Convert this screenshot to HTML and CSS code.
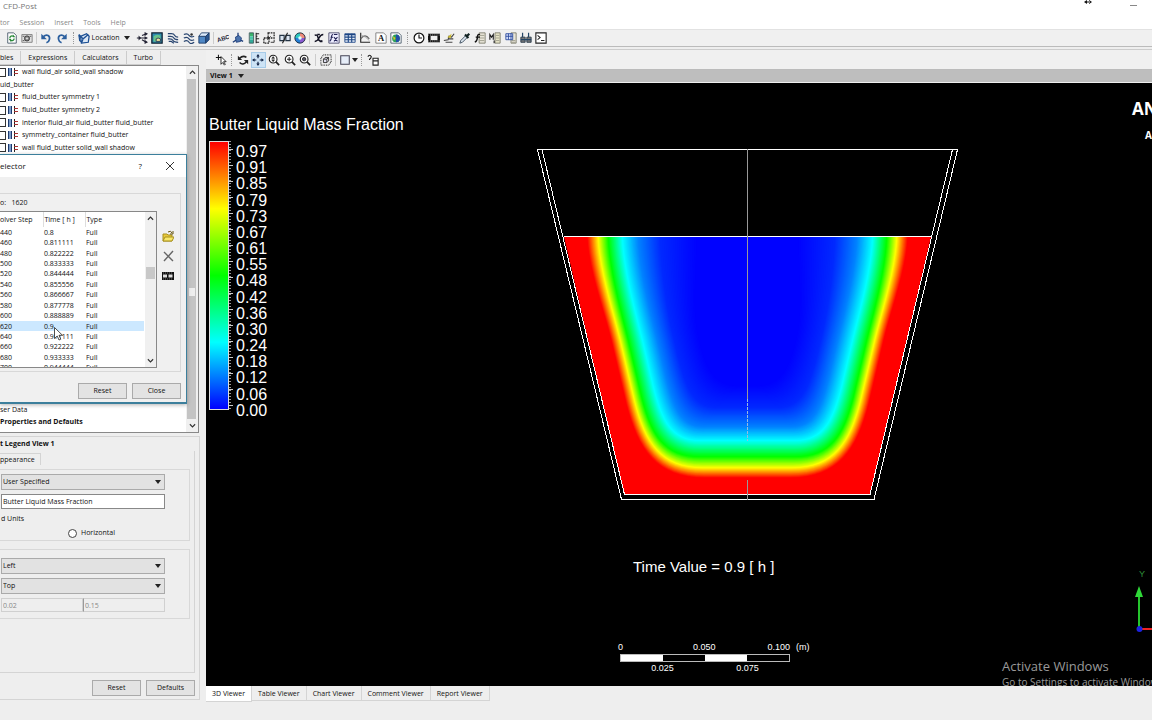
FILE: index.html
```html
<!DOCTYPE html>
<html lang="en">
<head>
<meta charset="utf-8">
<title>CFD-Post</title>
<link rel="stylesheet" href="styles.css">
</head>
<body>
<div class="app">
  <header class="titlebar">
    <span>CFD-Post</span>
    <svg class="resize-mark" width="8" height="6" viewBox="0 0 8 6"><path d="M0 2l3-2v4zM8 2L5 0v4zM2 1.500h4v1H2z" fill="#111"/></svg>
    <svg class="minimize" width="8" height="6" viewBox="0 0 8 6"><path d="M0 5.500h7" stroke="#888"/></svg>
  </header>
  <nav class="menubar">
    <a href="#">tor</a><a href="#">Session</a><a href="#">Insert</a><a href="#">Tools</a><a href="#">Help</a>
  </nav>

  <div class="toolbar" role="toolbar" aria-label="Main">
    <div class="group g-file">
      <button aria-label="Refresh"><svg viewBox="0 0 14 14"><path d="M2 1h7l3 3v9H2z" fill="#fff" stroke="#456"/><path d="M4.500 7a2.500 2.500 0 0 1 4-2M9.500 7.500a2.500 2.500 0 0 1-4 2" fill="none" stroke="#2a8a3a" stroke-width="1.500"/><path d="M8 3v3h3zM6 12V8H3z" fill="#2a8a3a"/></svg></button>
      <button aria-label="Snapshot"><svg viewBox="0 0 14 14"><path d="M1 3h12v9H1z" fill="#e4e4e4" stroke="#777"/><circle cx="7" cy="7.500" r="3" fill="#888" stroke="#333"/><circle cx="7" cy="7.500" r="1" fill="#eee"/><path d="M2 5h2M10 5h2M2 10h2" stroke="#444"/></svg></button>
    </div>
    <i class="sep"></i>
    <div class="group g-undo">
      <button aria-label="Undo"><svg viewBox="0 0 14 14"><path d="M4 5.500c4-4 8-1 7 3q-.5 3-3.500 4" fill="none" stroke="#2b5f9e" stroke-width="2"/><path d="M1.500 2v6.500H8z" fill="#2b5f9e"/></svg></button>
      <button aria-label="Redo"><svg viewBox="0 0 14 14"><path d="M10 5.500c-4-4-8-1-7 3q.5 3 3.500 4" fill="none" stroke="#2b5f9e" stroke-width="2"/><path d="M12.500 2v6.500H6z" fill="#2b5f9e"/></svg></button>
    </div>
    <i class="handle"></i>
    <button class="location"><svg viewBox="0 0 14 14"><path d="M3 5l7-3 3 3-1 7-8 1z" fill="#dbe7f5" stroke="#1c4f93" stroke-width="1.500"/><path d="M1 3l5 5 6-5M6 8l-2 5M1 3l1 7 3 2" fill="none" stroke="#1c4f93" stroke-width="1.500"/></svg><span>Location</span><i class="arrow"></i></button>
    <div class="group g-objects">
      <button aria-label="Vector"><svg viewBox="0 0 14 14"><path d="M1 7h6M7 4l5-2M7 7h5M7 9l5 3" stroke="#223" stroke-width="1.300"/><path d="M3 4l3 3-3 3zM10 0l4 2-4 3zM10 5l4 2-4 2zM10 9l4 3-4 2z" fill="#223"/></svg></button>
      <button aria-label="Contour"><svg viewBox="0 0 14 14"><path d="M1 1h12v12H1z" fill="#2e8fb0" stroke="#123" stroke-width="1.500"/><path d="M3 11V5q3-3 8-1v7z" fill="#69c38a"/><path d="M6 11V8q2-2 5 0v3z" fill="#e6e09a" stroke="#235"/></svg></button>
      <button aria-label="Streamline"><svg viewBox="0 0 14 14"><path d="M1 2h4q3 0 4 2t4 2M1 5h3q3 0 4 2t5 2M1 8h2q3 0 4 2t6 2M2 11h3l3 2" fill="none" stroke="#294570" stroke-width="1.400"/></svg></button>
      <button aria-label="Particle track"><svg viewBox="0 0 14 14"><path d="M1 3q4-2 6 1t6 1M1 7q4-2 6 1t6 1M1 11q4-2 6 1t6 0" fill="none" stroke="#294570" stroke-width="1.400"/><circle cx="10" cy="3" r="1.500" fill="#333"/></svg></button>
      <button aria-label="Volume rendering"><svg viewBox="0 0 14 14"><path d="M1 5h8v8H1z" fill="#4f87c4" stroke="#1b3a66"/><path d="M1 5l3-4h9L9 5z" fill="#dceafa" stroke="#1b3a66"/><path d="M9 5l4-4v8l-4 4z" fill="#2a5690" stroke="#1b3a66"/></svg></button>
    </div>
    <i class="sep"></i>
    <div class="group g-tools">
      <button aria-label="Text"><svg viewBox="0 0 14 14"><text x="0" y="10" font-family="Liberation Sans" font-size="7" font-weight="700" fill="#223" transform="rotate(-18 7 8)">ABC</text></svg></button>
      <button aria-label="Coordinate frame"><svg viewBox="0 0 14 14"><path d="M7 1v7L1 12M7 8l6 3" fill="none" stroke="#1c3c78" stroke-width="1.500"/><path d="M4 6l4-2 3 3-1 4-5 1z" fill="#4d74ad" stroke="#1c3c78"/></svg></button>
      <button aria-label="Legend"><svg viewBox="0 0 14 14"><path d="M2 1h4v4H2z" fill="#3bb36a"/><path d="M2 5h4v4H2z" fill="#4cc8a8"/><path d="M2 9h4v4H2z" fill="#3a9"/><path d="M1.500 1h5v12h-5z" fill="none" stroke="#355"/><path d="M9.500 1v12M9 2h4M9 5h2M9 8h4M9 12h4" fill="none" stroke="#222" stroke-width="1.200"/></svg></button>
      <button aria-label="Instance transform"><svg viewBox="0 0 14 14"><path d="M6 1h7v6H6z M1 7h6v6H1z" fill="#eee" stroke="#222" stroke-width="1.500" stroke-dasharray="2 1"/><path d="M5 9l4-4M9 12h4V9" stroke="#222" fill="none"/></svg></button>
      <button aria-label="Clip plane"><svg viewBox="0 0 14 14"><path d="M1 4h5v6H1zM8 4h5v6H8z" fill="#dce6f2" stroke="#234" stroke-width="1.300"/><path d="M4 13l6-12" stroke="#222" stroke-width="1.300"/></svg></button>
      <button aria-label="Color map"><svg viewBox="0 0 14 14"><path d="M7 7V1a6 6 0 0 1 6 6z" fill="#f08a7a"/><path d="M7 7h6a6 6 0 0 1-6 6z" fill="#8a5ad0"/><path d="M7 7v6a6 6 0 0 1-6-6z" fill="#2580d8"/><path d="M7 7H1a6 6 0 0 1 6-6z" fill="#30c8c0"/><circle cx="7" cy="7" r="6" fill="none" stroke="#123"/><circle cx="7" cy="7" r="2" fill="#dff"/></svg></button>
    </div>
    <i class="sep"></i>
    <div class="group g-data">
      <button aria-label="Variable"><svg viewBox="0 0 14 14"><path d="M2 4q3-2 4 3t5 3M12 3Q9 3 7 7t-5 4M5 3h3M8 11h3" fill="none" stroke="#112" stroke-width="1.700"/></svg></button>
      <button aria-label="Expression"><svg viewBox="0 0 14 14"><path d="M1 1h12v12H1z" fill="#eef" stroke="#446"/><path d="M6 3Q4 3 4 6t-2 5M3 6h3M7 6l4 5M11 6l-4 5M7 3h4" fill="none" stroke="#225" stroke-width="1.200"/></svg></button>
      <button aria-label="Table"><svg viewBox="0 0 14 14"><path d="M1 2h12v10H1z" fill="#e8f0fa" stroke="#1c4585"/><path d="M1 3h12M1 6h12M1 9h12M5 2v10M9 2v10" stroke="#1c4585" stroke-width="1.300"/></svg></button>
      <button aria-label="Chart"><svg viewBox="0 0 14 14"><path d="M2 1v11h11" fill="none" stroke="#222" stroke-width="1.300"/><path d="M2 8q5-7 10 0" fill="none" stroke="#666" stroke-width="1.300"/><path d="M3 4q5 1 9 6" fill="none" stroke="#999"/></svg></button>
      <button aria-label="Comment"><svg viewBox="0 0 14 14"><path d="M1 1h9l3 3v9H1z" fill="#fff" stroke="#777"/><text x="3.500" y="11" font-family="Liberation Serif" font-size="10" font-weight="700" fill="#111">A</text></svg></button>
      <button aria-label="Figure"><svg viewBox="0 0 14 14"><path d="M1 1h9l3 3v9H1z" fill="#fff" stroke="#456"/><circle cx="7" cy="7.500" r="4.500" fill="#2aa05a"/><path d="M7 3a4.500 4.500 0 0 1 0 9z" fill="#234fa8"/><path d="M3.500 5l3 2-2 3z" fill="#e3c32d"/></svg></button>
    </div>
    <i class="handle"></i>
    <div class="group g-calc">
      <button aria-label="Timestep selector"><svg viewBox="0 0 14 14"><circle cx="7" cy="7" r="5.700" fill="#fff" stroke="#111" stroke-width="1.400"/><path d="M7 3v4h3.500" fill="none" stroke="#111" stroke-width="1.300"/></svg></button>
      <button aria-label="Animation"><svg viewBox="0 0 14 14"><path d="M0 2h14v10H0z" fill="#111"/><path d="M3 4.500h8v5H3z" fill="#eee"/><path d="M0 3.500h14M0 10.500h14" stroke="#ccc" stroke-dasharray="1 1.500"/></svg></button>
      <button aria-label="Quick editor"><svg viewBox="0 0 14 14"><path d="M1 10l5-1 1-4 3 1 3-4M7 8h5M3 12h8" fill="none" stroke="#444" stroke-width="1.300"/><path d="M5 6l5-4-1 5z" fill="#c9b82e"/></svg></button>
      <button aria-label="Probe"><svg viewBox="0 0 14 14"><path d="M1 13l1-3 6-6 2 2-6 6z" fill="#dce6ef" stroke="#345"/><path d="M7 3l4 4M9 5l3-3" stroke="#122" stroke-width="2.600"/></svg></button>
      <button aria-label="Function calculator"><svg viewBox="0 0 14 14"><path d="M6 1h7v12H6z" fill="#e8e5d8" stroke="#776"/><path d="M7 4h5M7 7h5M7 10h5" stroke="#998"/><path d="M7 3Q4 2 4 6t-3 6M2 6h5" fill="none" stroke="#111" stroke-width="1.600"/></svg></button>
      <button aria-label="Macro calculator"><svg viewBox="0 0 14 14"><path d="M7 1h6v12H7z" fill="#e8e5c8" stroke="#776"/><path d="M8 4h4M8 7h4M8 10h4" stroke="#998"/><path d="M1 9V3l2 3 2-3v6M6 10v3" fill="none" stroke="#222" stroke-width="1.300"/></svg></button>
      <button aria-label="Mesh calculator"><svg viewBox="0 0 14 14"><path d="M7 1h6v12H7z" fill="#e8e5d8" stroke="#776"/><path d="M8 10h4M8 12h4" stroke="#998"/><path d="M1 2h8v7H1zM1 5h8M4 2v7M7 2v7" fill="#dbe5ff" stroke="#25459a"/></svg></button>
      <button aria-label="Case comparison"><svg viewBox="0 0 14 14"><path d="M1 6h5v6H1zM8 6h5v6H8z" fill="#777" stroke="#234"/><path d="M3 1v5M10 1v5M1 9h12" stroke="#246" stroke-width="1.400"/></svg></button>
      <button aria-label="Command editor"><svg viewBox="0 0 14 14"><path d="M1 1h12v12H1z" fill="#fff" stroke="#222" stroke-width="1.300"/><path d="M3 4l3 2.500L3 9M7 10h4" fill="none" stroke="#222" stroke-width="1.200"/></svg></button>
    </div>
  </div>

  <div class="workspace">
    <aside class="side">
      <div class="tabs"><button>bles</button><button>Expressions</button><button>Calculators</button><button>Turbo</button></div>
      <div class="tree">
        <ul class="tree-top">
          <li><input type="checkbox" id="c1"><i class="bc"></i><label for="c1">wall fluid_air solid_wall shadow</label></li>
          <li>uid_butter</li>
          <li><input type="checkbox" id="c2"><i class="bc"></i><label for="c2">fluid_butter symmetry 1</label></li>
          <li><input type="checkbox" id="c3"><i class="bc"></i><label for="c3">fluid_butter symmetry 2</label></li>
          <li><input type="checkbox" id="c4"><i class="bc"></i><label for="c4">interior fluid_air fluid_butter fluid_butter</label></li>
          <li><input type="checkbox" id="c5"><i class="bc"></i><label for="c5">symmetry_container fluid_butter</label></li>
          <li><input type="checkbox" id="c6"><i class="bc"></i><label for="c6">wall fluid_butter solid_wall shadow</label></li>
        </ul>
        <ul class="tree-bottom"><li>ser Data</li><li class="bold">Properties and Defaults</li></ul>
        <div class="scroll"><svg viewBox="0 0 8 6"><path d="M1 5l3-3 3 3"/></svg><i class="track"><i class="thumb"></i></i><svg viewBox="0 0 8 6"><path d="M1 1l3 3 3-3"/></svg></div>
      </div>

      <section class="details">
        <h2>t Legend View 1</h2>
        <div class="page">
          <button class="page-tab">ppearance</button>
          <fieldset>
            <div class="combo"><select aria-label="Title mode"><option>User Specified</option></select></div>
            <input class="field" type="text" aria-label="Title" value="Butter Liquid Mass Fraction">
            <p>d Units</p>
            <label class="radio"><input type="radio" name="orient">Horizontal</label>
          </fieldset>
          <fieldset class="second">
            <div class="combo"><select aria-label="X justification"><option>Left</option></select></div>
            <div class="combo"><select aria-label="Y justification"><option>Top</option></select></div>
            <div class="pair"><input type="text" aria-label="X position" value="0.02" disabled><input type="text" aria-label="Y position" value="0.15" disabled></div>
          </fieldset>
        </div>
        <div class="actions"><button class="btn">Reset</button><button class="btn">Defaults</button></div>
      </section>

      <section class="dialog" role="dialog" aria-label="Timestep Selector">
        <header><span>elector</span><button aria-label="Help">?</button><button aria-label="Close window"><svg viewBox="0 0 8 8"><path d="M0 0l8 8M8 0L0 8"/></svg></button></header>
        <div class="dialog-group">
          <p>o:&nbsp;&nbsp; 1620</p>
          <div class="dialog-main">
            <div class="list">
              <table>
                <thead><tr><th>olver Step</th><th>Time [ h ]</th><th>Type</th></tr></thead>
                <tbody>
                  <tr><td>440</td><td>0.8</td><td>Full</td></tr>
                  <tr><td>460</td><td>0.811111</td><td>Full</td></tr>
                  <tr><td>480</td><td>0.822222</td><td>Full</td></tr>
                  <tr><td>500</td><td>0.833333</td><td>Full</td></tr>
                  <tr><td>520</td><td>0.844444</td><td>Full</td></tr>
                  <tr><td>540</td><td>0.855556</td><td>Full</td></tr>
                  <tr><td>560</td><td>0.866667</td><td>Full</td></tr>
                  <tr><td>580</td><td>0.877778</td><td>Full</td></tr>
                  <tr><td>600</td><td>0.888889</td><td>Full</td></tr>
                  <tr class="selected"><td>620</td><td>0.9</td><td>Full</td></tr>
                  <tr><td>640</td><td>0.911111</td><td>Full</td></tr>
                  <tr><td>660</td><td>0.922222</td><td>Full</td></tr>
                  <tr><td>680</td><td>0.933333</td><td>Full</td></tr>
                  <tr><td>700</td><td>0.944444</td><td>Full</td></tr>
                </tbody>
              </table>
              <div class="scroll light"><svg viewBox="0 0 8 6"><path d="M1 5l3-3 3 3"/></svg><i class="track"><i class="thumb"></i></i><svg viewBox="0 0 8 6"><path d="M1 1l3 3 3-3"/></svg></div>
            </div>
            <div class="list-tools">
              <button aria-label="Add"><svg viewBox="0 0 12 12"><path d="M1 11V4h4l1 1h4v6z" fill="#e8c93a" stroke="#a8901f"/><path d="M1 11l2-4h9l-2 4z" fill="#f8e86a" stroke="#a8901f"/><path d="M6 2q3-2 4 1M11 1v3H8" fill="none" stroke="#665510"/></svg></button>
              <button aria-label="Delete"><svg viewBox="0 0 12 12"><path d="M2 2l9 9M11 1l-9 10" stroke="#666" stroke-width="1.400"/></svg></button>
              <button aria-label="Animate"><svg viewBox="0 0 12 12"><path d="M0 2h12v8H0z" fill="#111"/><path d="M1 4.500h4v3H1zM6.500 4.500h4v3h-4z" fill="#ddd"/><path d="M1 3h10M1 9h10" stroke="#999" stroke-width=".7" stroke-dasharray="1 1"/></svg></button>
            </div>
          </div>
        </div>
        <div class="actions"><button class="btn">Reset</button><button class="btn">Close</button></div>
        <svg class="cursor" viewBox="0 0 9 14"><path d="M.5.5v11l2.700-2.500 1.800 4 1.800-.8-1.800-3.900h3.500z" fill="#fff" stroke="#222" stroke-width=".8"/></svg>
      </section>
    </aside>

    <main class="view">
      <div class="toolbar viewbar" role="toolbar" aria-label="Viewer">
        <button aria-label="Select"><svg viewBox="0 0 14 14"><path d="M1 4h6M4 1v6" stroke="#111" stroke-width="1.200"/><path d="M7 3v9l2-2 2 3 1-1-2-3h3z" fill="#fff" stroke="#111"/></svg></button>
        <i class="handle"></i>
        <div class="group g-nav">
          <button aria-label="Rotate"><svg viewBox="0 0 14 14"><path d="M3 5q4-4 8-1M11 9q-4 5-8 1" fill="none" stroke="#222" stroke-width="1.800"/><path d="M1 2v5h5zM13 12V7H8z" fill="#222"/></svg></button>
          <button class="active" aria-label="Pan"><svg viewBox="0 0 14 14"><path d="M7 2v3M7 9v3M2 7h3M9 7h3" stroke="#124" stroke-width="1.400"/><path d="M7 0l2 3H5zM7 14l2-3H5zM0 7l3-2v4zM14 7l-3-2v4z" fill="#124"/></svg></button>
          <button aria-label="Zoom"><svg viewBox="0 0 14 14"><circle cx="6" cy="6" r="4.500" fill="#fff" stroke="#222" stroke-width="1.300"/><path d="M9 9l4 4" stroke="#222" stroke-width="2"/><path d="M4 6h4M6 3l1.500 2h-3zM6 9l1.500-2h-3z" fill="#222" stroke="#222" stroke-width=".6"/></svg></button>
          <button aria-label="Zoom box"><svg viewBox="0 0 14 14"><circle cx="6" cy="6" r="4.500" fill="#fff" stroke="#222" stroke-width="1.300"/><path d="M9 9l4 4" stroke="#222" stroke-width="2"/><path d="M3.500 6h5M6 3.500v5" stroke="#222" stroke-width="1.200"/></svg></button>
          <button aria-label="Fit view"><svg viewBox="0 0 14 14"><circle cx="6" cy="6" r="4.500" fill="#fff" stroke="#222" stroke-width="1.300"/><path d="M9 9l4 4" stroke="#222" stroke-width="2"/><circle cx="6" cy="6" r="2" fill="#556" stroke="#222"/></svg></button>
        </div>
        <i class="sep"></i>
        <button aria-label="Highlight"><svg viewBox="0 0 14 14"><path d="M4 1h9v8l-3 4H1V5z" fill="none" stroke="#333" stroke-width="1.500" stroke-dasharray="1 1"/><path d="M4 6h4v4H4zM4 6l2-2h4L8 6M10 4v4l-2 2" fill="#dde" stroke="#222"/></svg></button>
        <i class="sep"></i>
        <button class="layout" aria-label="Viewport layout"><svg viewBox="0 0 14 14"><path d="M2 2h10v10H2z" fill="#e6edf8" stroke="#445" stroke-width="1.200"/></svg><i class="arrow"></i></button>
        <i class="handle"></i>
        <button aria-label="Viewer help"><svg viewBox="0 0 14 14"><path d="M1 3q2-3 4 0 0 2-2 3v1" fill="none" stroke="#111" stroke-width="1.300"/><path d="M7 5h6v8H7zM7 8h6" fill="#fff" stroke="#222" stroke-width="1.300"/></svg></button>
      </div>
      <button class="viewhead">View 1 <i class="arrow"></i></button>

      <div class="scene">
        <div class="legend">
          <h1>Butter Liquid Mass Fraction</h1>
          <div class="legend-body">
            <i class="bar"></i><i class="ticks"></i>
            <ol><li>0.97</li><li>0.91</li><li>0.85</li><li>0.79</li><li>0.73</li><li>0.67</li><li>0.61</li><li>0.55</li><li>0.48</li><li>0.42</li><li>0.36</li><li>0.30</li><li>0.24</li><li>0.18</li><li>0.12</li><li>0.06</li><li>0.00</li></ol>
          </div>
        </div>
        <svg class="cup" viewBox="536 148 424 354" role="img" aria-label="Mass fraction contour in container">
          <defs><clipPath id="fill"><path d="M564 237H931L870 494H624z"/></clipPath></defs>
          <g clip-path="url(#fill)"><path d="M560 230h380v270H560z" fill="#f00"/><g id="bands"></g></g>
          <g fill="none" stroke="#fff" shape-rendering="crispEdges">
            <path d="M537 149.500H957.500L874 499.500H621.500L537.500 149.500M542 149.500L624.500 494.500H870L952.500 149.500M564 236.500H931"/>
            <path d="M747 149v250M747 480v20" stroke="#999"/>
            <path d="M747 399v42" stroke="#9bd" stroke-dasharray="3 1"/>
          </g>
        </svg>
        <p class="time">Time Value = 0.9 [ h ]</p>
        <div class="scale">
          <div class="scale-top"><span>0</span><span>0.050</span><span>0.100</span><span class="unit">(m)</span></div>
          <div class="scale-bar"><i></i><i></i><i></i><i></i></div>
          <div class="scale-low"><span>0.025</span><span>0.075</span></div>
        </div>
        <div class="brand"><strong>ANSYS</strong><span>Academic</span></div>
        <svg class="axes" viewBox="0 0 20 64"><text x="7" y="8" font-family="Liberation Sans" font-size="9" fill="#2f8f3a">Y</text><path d="M7 28v31" stroke="#25c52d" stroke-width="2"/><path d="M7 17l4 11H3z" fill="#2fd838"/><path d="M9 60h11" stroke="#e22" stroke-width="2"/><circle cx="7.500" cy="60" r="3" fill="#1c22e0"/></svg>
        <div class="activate"><strong>Activate Windows</strong><span>Go to Settings to activate Windows.</span></div>
      </div>

      <nav class="viewtabs"><button class="on">3D Viewer</button><button>Table Viewer</button><button>Chart Viewer</button><button>Comment Viewer</button><button>Report Viewer</button></nav>
    </main>
  </div>
</div>
<script src="contour.js"></script>
</body>
</html>
```

FILE: contour.js
```js
// Key iso-lines, outermost first: top x, mid x, end of straight side (y), floor y, start of flat floor (x), colour
const keys = [
  [587, 611, 404, 478, 705, [255, 0, 0]],
  [598, 620, 402, 468, 703, [255, 255, 0]],
  [608, 628, 398, 457, 700, [0, 255, 0]],
  [622, 642, 388, 441, 700, [0, 255, 255]],
  [638, 657, 375, 427, 705, [0, 128, 255]],
  [660, 674, 355, 408, 718, [0, 40, 255]],
  [698, 700, 342, 385, 740, [0, 0, 255]]
];
const mid = 747.5;
const mirror = x => 2 * mid - x;
const mix = (a, b, t) => a + (b - a) * t;

function band(tx, mx, sy, fy, fx) {
  const sx = mx + 0.235 * (sy - 340);
  const k = (fy - sy) * 0.62;
  const cx = sx + 0.26 * k;
  const c2 = fx - (fx - sx) * 0.62;
  const m = mirror;
  return `M${tx} 230V237C${tx + 1} 268 ${mx - 8} 308 ${mx} 340L${sx} ${sy}` +
    `C${cx} ${sy + k} ${c2} ${fy} ${fx} ${fy}H${m(fx)}` +
    `C${m(c2)} ${fy} ${m(cx)} ${sy + k} ${m(sx)} ${sy}` +
    `L${m(mx)} 340C${m(mx - 8)} 308 ${m(tx + 1)} 268 ${m(tx)} 237V230z`;
}

const host = document.getElementById("bands");
const steps = 20;
for (let i = 0; i < keys.length - 1; i++) {
  for (let s = 0; s < steps; s++) {
    const t = s / steps;
    const p = [0, 1, 2, 3, 4].map(n => mix(keys[i][n], keys[i + 1][n], t));
    const c = [0, 1, 2].map(n => Math.round(mix(keys[i][5][n], keys[i + 1][5][n], t)));
    const path = document.createElementNS("http://www.w3.org/2000/svg", "path");
    path.setAttribute("d", band(...p));
    path.setAttribute("fill", `rgb(${c})`);
    host.appendChild(path);
  }
}
```

FILE: styles.css
```css
* { box-sizing: border-box; }
body { margin: 0; font: 7px/10px "Open Sans", "Noto Sans", sans-serif; color: #111; background: #eee; }
button, input, select { font: inherit; color: inherit; margin: 0; padding: 0; border: 0; background: none; border-radius: 0; }
h1, h2, p, ul, ol { margin: 0; padding: 0; font: inherit; list-style: none; }
svg { display: block; }
i { display: block; }

.app { display: flex; flex-direction: column; height: 100vh; overflow: hidden; }
.titlebar { background: #fff; height: 15px; padding: 0 14px 0 3px; display: flex; color: #777; font-size: 8px; line-height: 12px; }
.resize-mark { margin-left: auto; }
.minimize { margin-left: 38px; }
.menubar { background: #fff; height: 14px; display: flex; gap: 10px; line-height: 15px; }
.menubar a { color: #888; text-decoration: none; }

.toolbar { display: flex; align-items: center; height: 18px; border-top: 1px solid #e2e2e2; border-bottom: 1px solid #bbb; background: #f0f0f0; }
.toolbar button { display: flex; align-items: center; justify-content: center; height: 16px; min-width: 15px; }
.toolbar svg { width: 12px; height: 12px; flex: none; }
.group { display: flex; }
.toolbar .group button { flex: 1; }
.sep { width: 1px; height: 12px; background: #ccc; margin: 0 1px; flex: none; }
.handle { width: 1px; height: 12px; border-left: 1px dotted #999; margin: 0 3px; flex: none; }
.arrow { width: 0; height: 0; border: 3px solid transparent; border-top: 4px solid #222; border-bottom: 0; }
.g-file { width: 31px; margin-left: 4px; }
.g-undo { width: 32px; }
.toolbar .location { gap: 2px; width: 54px; margin-right: 3px; }
.location .arrow { margin-left: 3px; }
.g-objects { width: 78px; }
.g-tools { width: 93px; }
.g-data { width: 93px; }
.g-calc { width: 138px; }

.workspace { flex: 1; display: flex; min-height: 0; border-top: 1px solid #ccc; margin-top: 2px; }
.side { width: 206px; flex: none; position: relative; display: flex; flex-direction: column; }
.tabs { display: flex; height: 15px; padding-top: 1px; }
.tabs button { padding: 0 7px; border-right: 1px solid #ccc; border-bottom: 1px solid #ccc; }
.tabs button:first-child { padding: 0 7px 0 0; }
.tree { position: relative; width: 199px; height: 368px; background: #fff; border: 1px solid #888; border-left: 0; display: flex; flex-direction: column; justify-content: space-between; }
.tree-top { height: 88px; display: flex; flex-direction: column; }
.tree-top li { flex: 1; display: flex; align-items: center; white-space: nowrap; }
.tree input { appearance: none; width: 6px; height: 9px; border: 1px solid #333; border-left: 0; }
.bc { width: 10px; height: 8px; margin: 0 4px 0 2px; background: linear-gradient(#a33, #a33) 6px 2px / 4px 1px no-repeat, linear-gradient(#a33, #a33) 6px 5px / 4px 1px no-repeat, linear-gradient(#222, #222) 6px 0 / 1px 8px no-repeat, linear-gradient(90deg, #1c3a70 1px, #7d9cc8 1px 3px, #1c3a70 3px) 0 0 / 4px 8px no-repeat; }
.tree-bottom { height: 29px; line-height: 12px; padding-top: 1px; }
.bold { font-weight: 700; }
.scroll { position: absolute; top: 0; right: 0; bottom: 0; width: 12px; background: #f0f0f0; display: flex; flex-direction: column; align-items: center; padding: 3px 0; gap: 4px; }
.scroll svg { width: 7px; height: 6px; fill: none; stroke: #333; stroke-width: 1.3; }
.track { flex: 1; align-self: stretch; background: #c4c4c4; margin: 0 2px 0 1px; }
.thumb { width: 6px; height: 8px; background: #eee; margin: 209px auto 0; }
.light .track { background: #f0f0f0; margin: 0 1px; }
.light .thumb { width: 9px; height: 12px; background: #c8c8c8; margin-top: 42px; }

.details { width: 200px; margin-top: 3px; border: 1px solid #d4d4d4; border-left: 0; padding-right: 4px; }
.details h2 { font-weight: 700; line-height: 14px; }
.page { height: 222px; border-right: 1px solid #d4d4d4; border-bottom: 1px solid #d4d4d4; padding: 2px 4px 0 0; }
.page-tab { display: block; height: 12px; width: 41px; text-align: left; border-right: 1px solid #d4d4d4; border-top: 1px solid #d4d4d4; line-height: 11px; }
fieldset { margin: 4px 0 0; min-width: 0; height: 72px; border: 1px solid #d8d8d8; border-left: 0; padding: 4px 24px 0 1px; display: flex; flex-direction: column; }
.second { margin-top: 8px; height: 70px; padding-top: 8px; }
.combo { position: relative; height: 16px; border: 1px solid #aaa; background: #e2e2e2; flex: none; }
.combo + .combo { margin-top: 4px; }
.combo::after { content: ""; position: absolute; right: 3px; top: 5px; border: 3px solid transparent; border-top: 4px solid #222; border-bottom: 0; pointer-events: none; }
.combo select { appearance: none; width: 100%; height: 14px; padding-left: 1px; display: block; }
.field { height: 15px; flex: none; margin-top: 4px; border: 1px solid #888; background: #fff; padding-left: 1px; }
fieldset p { line-height: 16px; margin-top: 2px; height: 16px; }
.radio { display: flex; align-items: center; gap: 4px; margin-left: 67px; height: 12px; }
.radio input { appearance: none; width: 9px; height: 9px; border: 1px solid #444; border-radius: 50%; background: #fff; }
.pair { display: flex; margin-top: 4px; }
.pair input { flex: 1; min-width: 0; height: 14px; border: 1px solid #d0d0d0; padding-left: 1px; color: #888; }
.pair input + input { border-left-color: #999; }
.actions { display: flex; justify-content: flex-end; gap: 5px; padding: 7px 0 3px; }
.btn { width: 49px; height: 16px; border: 1px solid #aaa; background: #e3e3e3; }

.dialog { position: absolute; left: 0; top: 104px; width: 187px; height: 250px; background: #f0f0f0; border: 1px solid #3c7f9c; border-left: 0; border-bottom-width: 2px; box-shadow: 0 1px 4px rgba(0, 0, 0, .3); padding-right: 5px; }
.dialog header { height: 22px; background: #fff; margin-right: -5px; padding-right: 12px; display: flex; align-items: center; gap: 24px; font-size: 8px; }
.dialog header span { margin-right: auto; }
.dialog header svg { width: 8px; height: 8px; stroke: #333; fill: none; }
.dialog-group { margin-top: 16px; height: 179px; border: 1px solid #d8d8d8; border-left: 0; }
.dialog-group p { height: 17px; line-height: 18px; }
.dialog-main { display: flex; }
.list { position: relative; width: 157px; height: 157px; border: 1px solid #888; border-left: 0; background: #fff; overflow: hidden; padding-right: 12px; }
.list .scroll { width: 11px; }
.list table { width: 100%; height: 161px; border-collapse: collapse; table-layout: fixed; line-height: 9px; }
.list th, .list td { padding: 0; text-align: left; font-weight: 400; white-space: nowrap; }
.list th { height: 15px; }
.list th:nth-child(1) { width: 43px; }
.list th:nth-child(2) { width: 42px; }
.list th + th { border-left: 1px solid #ddd; padding-left: 1px; }
.list td + td { padding-left: 1px; }
.selected { background: #cce8ff; }
.list-tools { padding: 19px 0 0 5px; display: flex; flex-direction: column; gap: 8px; }
.list-tools svg { width: 12px; height: 12px; }
.dialog .actions { padding-top: 11px; }
.cursor { position: absolute; left: 54px; top: 172px; width: 9px; height: 14px; }

.view { flex: 1; min-width: 0; display: flex; flex-direction: column; }
.viewbar { height: 20px; padding-left: 7px; border-top: 0; }
.g-nav { width: 78px; }
.viewbar .active { background: #cde3f5; outline: 1px solid #a6cbe8; outline-offset: -1px; }
.viewbar > .sep { margin: 0 2px; }
.viewbar .layout { gap: 1px; width: 20px; }
.viewhead { flex: none; height: 13px; background: #bebebe; border-bottom: 1px solid #eee; display: flex; align-items: center; gap: 5px; padding-left: 4px; font-weight: 700; }
.scene { flex: 1; min-height: 0; position: relative; background: #000; color: #fff; overflow: hidden; font-family: "Liberation Sans", sans-serif; }
.legend { position: absolute; left: 3px; top: 32px; }
.legend h1 { font-size: 16px; line-height: 20px; white-space: nowrap; }
.legend-body { display: flex; }
.bar { width: 20px; height: 269px; margin-top: 6px; border: 1px solid #ddd; background: linear-gradient(#f00, #ff0 25%, #0f0 50%, #0ff 75%, #00f); }
.ticks { width: 4px; height: 269px; margin-top: 6px; background: repeating-linear-gradient(#ccc 0 1px, transparent 1px 16px) 0 8px, repeating-linear-gradient(#999 0 1px, transparent 1px 3px) 0 0 / 2px 100% no-repeat; }
.legend ol { height: 275px; margin: 9px 0 0 3px; display: flex; flex-direction: column; font-size: 16px; }
.legend li { flex: 1; line-height: 16px; }
.cup { position: absolute; left: 330px; top: 65px; width: 424px; height: 354px; }
.time { position: absolute; left: 427px; top: 474px; font-size: 15px; line-height: 20px; white-space: nowrap; }
.scale { position: absolute; left: 414px; top: 559px; width: 170px; font-size: 9px; line-height: 10px; }
.scale-top { position: relative; display: flex; justify-content: space-between; }
.scale-top span:first-child { width: 23px; margin-left: -2px; }
.scale .unit { position: absolute; left: 176px; }
.scale-bar { display: flex; border: 1px solid #bbb; height: 8px; margin-top: 2px; }
.scale-bar i { flex: 1; }
.scale-bar i:nth-child(odd) { background: #fff; }
.scale-low { display: flex; justify-content: space-around; padding: 1px 0; }
.brand { position: absolute; left: calc(100% - 20px); top: 15px; white-space: nowrap; display: flex; flex-direction: column; gap: 10px; font-family: "Open Sans", sans-serif; }
.brand strong { font-size: 17px; line-height: 22px; }
.brand span { font-size: 10px; font-weight: 700; margin-left: 13px; }
.axes { position: absolute; right: 0; top: 486px; width: 20px; height: 64px; }
.activate { position: absolute; left: calc(100% - 150px); bottom: -3px; white-space: nowrap; color: #999; font-family: "Open Sans", sans-serif; display: flex; flex-direction: column; }
.activate strong { font-weight: 400; font-size: 13px; line-height: 18px; }
.activate span { font-size: 10px; line-height: 14px; }
.viewtabs { height: 34px; display: flex; align-items: flex-start; }
.viewtabs button { height: 15px; padding: 1px 6px 0; border-right: 1px solid #d4d4d4; border-bottom: 1px solid #d4d4d4; }
.viewtabs .on { background: #fff; height: 16px; }
```
